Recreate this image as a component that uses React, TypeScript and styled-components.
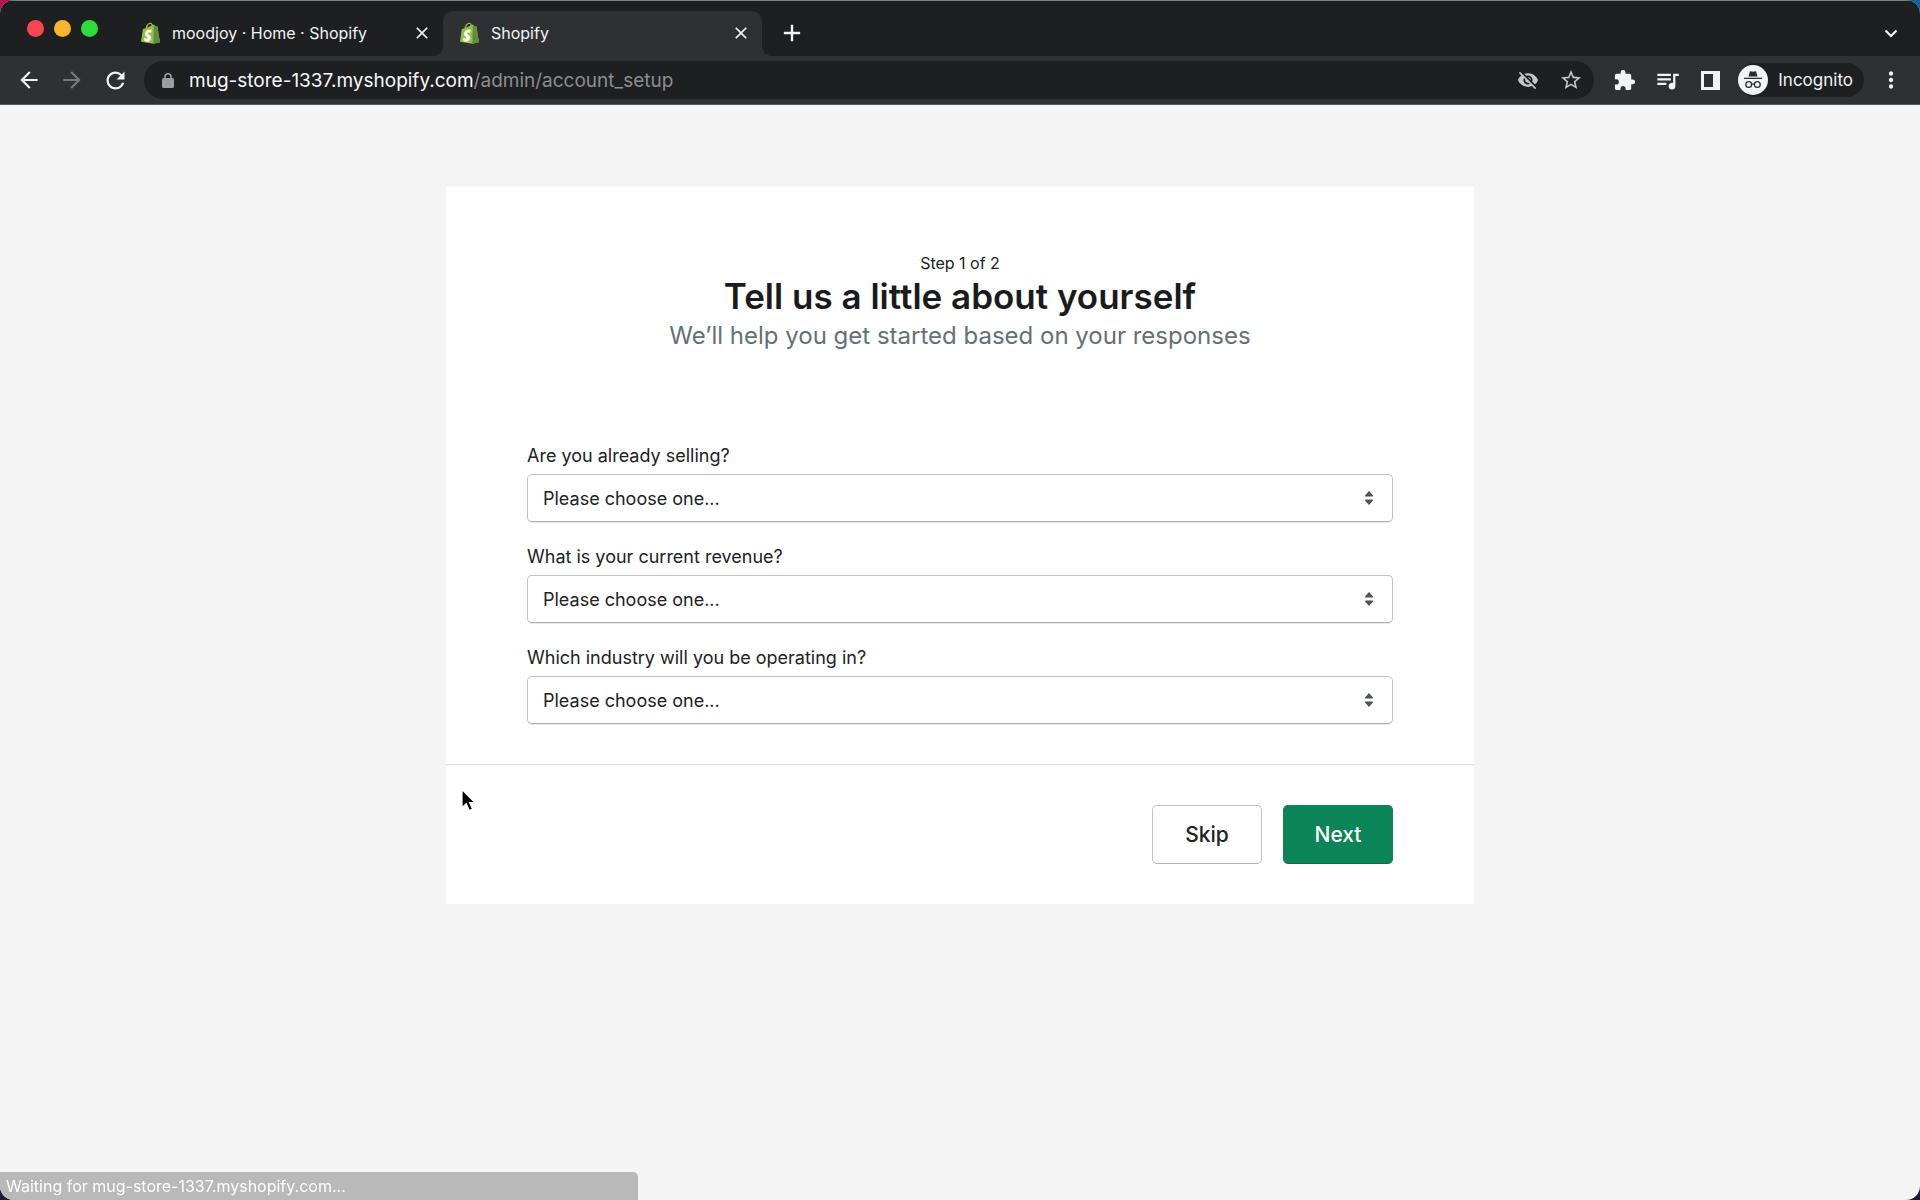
import React, { useState } from "react";
import styled, { createGlobalStyle } from "styled-components";
import {
  MdArrowBack,
  MdArrowForward,
  MdRefresh,
  MdVisibilityOff,
  MdStarOutline,
  MdExtension,
  MdQueueMusic,
  MdMoreVert,
  MdClose,
  MdAdd,
} from "react-icons/md";

const GlobalStyle = createGlobalStyle`
  *, *::before, *::after { box-sizing: border-box; }
  body {
    margin: 0;
    background: #1c1b33;
    font-family: Inter, "Liberation Sans", sans-serif;
    color: #202223;
  }
  button, select { font-family: inherit; }
`;

const Desktop = styled.div`
  min-height: 100vh;
  display: flex;
  background: linear-gradient(90deg, #b5124f 0, #b5124f 24px, #14619c 24px) top / 100% 24px no-repeat, #1c1b33;
`;

const Window = styled.div`
  flex: 1;
  min-width: 0;
  display: flex;
  flex-direction: column;
  border-radius: 14px;
  overflow: hidden;
  background: #f4f4f4;
`;

const TabStrip = styled.header`
  display: flex;
  align-items: flex-end;
  height: 56px;
  background: #1e1f21;
  border-top: 1px solid #7d7f82;
  padding-left: 27px;
  padding-right: 19px;
`;

const Lights = styled.div`
  display: flex;
  gap: 10px;
  align-self: center;
  width: 97px;
`;

const Light = styled.button<{ $color: string }>`
  width: 17px;
  height: 17px;
  padding: 0;
  border: 0;
  border-radius: 50%;
  background: ${(p) => p.$color};
`;

const Tab = styled.div<{ $active?: boolean }>`
  position: relative;
  display: flex;
  align-items: center;
  gap: 12px;
  width: 319px;
  height: 45px;
  padding: 0 11px 1px 17px;
  border-radius: 10px 10px 0 0;
  color: #f1f3f4;
  font-size: 16px;
  background: ${(p) => (p.$active ? "#2f3033" : "transparent")};

  &::before,
  &::after {
    content: "";
    display: ${(p) => (p.$active ? "block" : "none")};
    position: absolute;
    bottom: 0;
    width: 10px;
    height: 10px;
  }
  &::before {
    right: 100%;
    background: radial-gradient(circle at 0 0, transparent 10px, #2f3033 10px);
  }
  &::after {
    left: 100%;
    background: radial-gradient(circle at 100% 0, transparent 10px, #2f3033 10px);
  }
`;

const TabTitle = styled.span`
  flex: 1;
  white-space: nowrap;
`;

const IconButton = styled.button<{ $dim?: boolean }>`
  display: flex;
  align-items: center;
  justify-content: center;
  flex: none;
  width: 20px;
  height: 20px;
  padding: 0;
  border: 0;
  background: none;
  color: ${(p) => (p.$dim ? "#77797c" : "#f1f3f4")};

  svg { flex: none; }
`;

const NewTab = styled.div`
  display: flex;
  align-items: center;
  height: 45px;
  flex: 1;
  justify-content: space-between;
  padding: 0 0 1px 20px;
`;

const Toolbar = styled.nav`
  display: flex;
  align-items: center;
  height: 49px;
  background: #2f3033;
  border-bottom: 1px solid #58595c;
  padding: 0 19px;
`;

const NavButtons = styled.div`
  display: flex;
  gap: 23px;
  width: 125px;
`;

const AddressBar = styled.div`
  flex: 1;
  display: flex;
  align-items: center;
  height: 38px;
  border-radius: 19px;
  background: #1e1f21;
  padding: 0 13px 0 18px;
  color: #9a9c9f;
  font-size: 19px;
`;

const Url = styled.span`
  flex: 1;
  padding-left: 15px;
  color: #8b8d90;
  white-space: nowrap;

  b {
    font-weight: 400;
    color: #f8f9fa;
  }
`;

const PageActions = styled.div`
  display: flex;
  gap: 23px;

  button { color: #c4c6c9; }
`;

const Extensions = styled.div`
  display: flex;
  align-items: center;
  gap: 23px;
  padding: 0 18px 0 20px;
`;

const Profile = styled.button`
  display: flex;
  align-items: center;
  gap: 10px;
  height: 34px;
  padding: 0 11px 0 0;
  margin-right: 17px;
  border: 0;
  border-radius: 17px;
  background: #1e1f21;
  color: #f1f3f4;
  font-size: 17px;
`;

const Page = styled.main`
  flex: 1;
  padding: 81px 24px 40px;
`;

const Card = styled.form`
  max-width: 1028px;
  margin: 0 auto;
  background: #fff;
`;

const CardBody = styled.div`
  padding: 64px 81px 40px;
`;

const Heading = styled.div`
  text-align: center;
  padding-bottom: 89px;
`;

const Step = styled.p`
  margin: 0;
  font-size: 16px;
  line-height: 26px;
`;

const Title = styled.h1`
  margin: 0;
  font-size: 35px;
  font-weight: 600;
  line-height: 40px;
  color: #1a1b1c;
`;

const Subtitle = styled.p`
  margin: 0;
  font-size: 24px;
  line-height: 39px;
  color: #637078;
`;

const Fields = styled.div`
  display: flex;
  flex-direction: column;
  gap: 23px;
`;

const Field = styled.div`
  display: flex;
  flex-direction: column;
  gap: 6px;
`;

const Label = styled.label`
  font-size: 18px;
  line-height: 24px;
`;

const SelectBox = styled.div`
  position: relative;
  display: flex;

  svg {
    position: absolute;
    right: 19px;
    top: 17px;
    pointer-events: none;
  }
`;

const Select = styled.select`
  appearance: none;
  width: 100%;
  height: 48px;
  padding: 0 48px 0 15px;
  border: 1px solid #bfc2c4;
  border-bottom-color: #adb1b4;
  border-radius: 5px;
  background: #fff;
  box-shadow: 0 1px 0 #e6e7e8;
  color: #202223;
  font-size: 18px;
`;

const CardFooter = styled.footer`
  display: flex;
  justify-content: flex-end;
  gap: 21px;
  padding: 40px 81px;
  border-top: 1px solid #dcdedf;
`;

const Button = styled.button<{ $primary?: boolean }>`
  width: 110px;
  height: 59px;
  border: 1px solid ${(p) => (p.$primary ? "#0b8457" : "#bfc2c4")};
  border-bottom-color: ${(p) => (p.$primary ? "#076e47" : "#adb1b4")};
  border-radius: 5px;
  background: ${(p) => (p.$primary ? "#0b8457" : "#fff")};
  color: ${(p) => (p.$primary ? "#fff" : "#202223")};
  font-size: 21px;
  font-weight: 500;
`;

const StatusBubble = styled.div`
  position: fixed;
  left: 0;
  bottom: 0;
  width: 638px;
  height: 28px;
  padding-left: 6px;
  border-radius: 0 5px 0 14px;
  background: #b9b9b9;
  color: #fff;
  font-size: 16px;
  line-height: 28px;
`;

const Pointer = styled.svg`
  position: fixed;
  left: 460px;
  top: 788px;
  pointer-events: none;
`;

const ShopifyBag = () => (
  <svg width="19" height="22" viewBox="0 0 110 124" aria-hidden="true">
    <path fill="#95BF47" d="M95 24c0-1-1-1-1-1l-11-1-8-8c-1-1-2-1-3 0l-4 1C66 8 61 3 54 3 37 3 29 24 26 35l-12 4c-4 1-4 1-4 5L0 112l71 12 39-8z" />
    <path fill="#5E8E3E" d="M94 23l-11-1-8-8-4 110 39-8z" />
    <path fill="#1e1f21" d="M32 33C37 16 45 9 53 9c6 0 8 5 8 9z" />
    <path fill="none" stroke="#95BF47" strokeWidth="5" d="M32 36C37 15 45 6 54 6c8 0 11 9 11 23" />
    <path fill="#fff" stroke="#fff" strokeWidth="3" d="M61 45l-5 15s-5-2-10-2c-8 0-8 5-8 6 0 7 19 10 19 26 0 13-8 21-19 21-14 0-20-8-20-8l4-12s7 6 13 6c4 0 5-3 5-5 0-9-15-9-15-24 0-12 9-24 26-24 7 0 10 1 10 1z" />
  </svg>
);

const LockIcon = () => (
  <svg width="12" height="15" viewBox="0 0 12 15" aria-hidden="true">
    <rect y="5" width="12" height="10" rx="1.500" fill="currentColor" />
    <path fill="none" stroke="currentColor" strokeWidth="1.600" d="M3 6V3.800a3 3 0 0 1 6 0V6" />
  </svg>
);

const SidePanelIcon = () => (
  <svg width="19" height="19" viewBox="0 0 19 19" aria-hidden="true">
    <path fill="currentColor" fillRule="evenodd" d="M0 0h19v19H0zM3 3v13h9V3z" />
  </svg>
);

const IncognitoIcon = () => (
  <svg width="30" height="30" viewBox="0 0 30 30" aria-hidden="true">
    <circle cx="15" cy="15" r="15" fill="#f1f3f4" />
    <path fill="#2a2b2d" d="M10.500 11.500 11.800 6.700Q12 6 12.700 6.200L15 6.800 17.300 6.200Q18 6 18.200 6.700L19.500 11.500zM6 12.700h18v1.400H6z" />
    <g fill="none" stroke="#2a2b2d" strokeWidth="1.300">
      <circle cx="10.700" cy="19.500" r="2.900" />
      <circle cx="19.300" cy="19.500" r="2.900" />
      <path d="M13.600 19.300Q15 18.300 16.400 19.300" />
    </g>
  </svg>
);

const ChevronIcon = () => (
  <svg width="14" height="14" viewBox="0 0 14 14" aria-hidden="true">
    <path fill="none" stroke="currentColor" strokeWidth="2.200" d="M1.500 4.500 7 10l5.500-5.500" />
  </svg>
);

const SelectArrows = () => (
  <svg width="10" height="14" viewBox="0 0 10 14" aria-hidden="true">
    <path fill="#4f5356" d="M5 0 9 4.500Q9.300 5.500 8.300 5.500H1.700Q.7 5.500 1 4.500zM5 14 1 9.500Q.7 8.500 1.700 8.500h6.600q1 0 .7 1z" />
  </svg>
);

const tabs = [
  { title: "moodjoy · Home · Shopify", active: false },
  { title: "Shopify", active: true },
];

const questions = [
  { id: "selling", label: "Are you already selling?", options: ["Yes", "No"] },
  { id: "revenue", label: "What is your current revenue?", options: ["$0", "More than $0"] },
  { id: "industry", label: "Which industry will you be operating in?", options: ["Clothing", "Home", "Other"] },
];

export default function App() {
  const [answers, setAnswers] = useState<Record<string, string>>({});

  return (
    <Desktop>
      <GlobalStyle />
      <Window>
        <TabStrip>
          <Lights>
            <Light type="button" aria-label="Close window" $color="#f84552" />
            <Light type="button" aria-label="Minimize window" $color="#f8b42c" />
            <Light type="button" aria-label="Zoom window" $color="#2fdc3b" />
          </Lights>
          {tabs.map((tab) => (
            <Tab key={tab.title} $active={tab.active}>
              <ShopifyBag />
              <TabTitle>{tab.title}</TabTitle>
              <IconButton type="button" aria-label="Close tab">
                <MdClose size={20} />
              </IconButton>
            </Tab>
          ))}
          <NewTab>
            <IconButton type="button" aria-label="New tab">
              <MdAdd size={28} />
            </IconButton>
            <IconButton type="button" aria-label="Search tabs">
              <ChevronIcon />
            </IconButton>
          </NewTab>
        </TabStrip>
        <Toolbar>
          <NavButtons>
            <IconButton type="button" aria-label="Back"><MdArrowBack size={26} /></IconButton>
            <IconButton type="button" aria-label="Forward" $dim><MdArrowForward size={26} /></IconButton>
            <IconButton type="button" aria-label="Reload"><MdRefresh size={27} /></IconButton>
          </NavButtons>
          <AddressBar>
            <LockIcon />
            <Url><b>mug-store-1337.myshopify.com</b>/admin/account_setup</Url>
            <PageActions>
              <IconButton type="button" aria-label="Third-party cookies blocked"><MdVisibilityOff size={22} /></IconButton>
              <IconButton type="button" aria-label="Bookmark"><MdStarOutline size={24} /></IconButton>
            </PageActions>
          </AddressBar>
          <Extensions>
            <IconButton type="button" aria-label="Extensions"><MdExtension size={23} /></IconButton>
            <IconButton type="button" aria-label="Media"><MdQueueMusic size={27} /></IconButton>
            <IconButton type="button" aria-label="Side panel"><SidePanelIcon /></IconButton>
          </Extensions>
          <Profile type="button">
            <IncognitoIcon />
            Incognito
          </Profile>
          <IconButton type="button" aria-label="Menu"><MdMoreVert size={26} /></IconButton>
        </Toolbar>
        <Page>
          <Card onSubmit={(e) => e.preventDefault()}>
            <CardBody>
              <Heading>
                <Step>Step 1 of 2</Step>
                <Title>Tell us a little about yourself</Title>
                <Subtitle>We’ll help you get started based on your responses</Subtitle>
              </Heading>
              <Fields>
                {questions.map((q) => (
                  <Field key={q.id}>
                    <Label htmlFor={q.id}>{q.label}</Label>
                    <SelectBox>
                      <Select
                        id={q.id}
                        value={answers[q.id] ?? ""}
                        onChange={(e) => setAnswers({ ...answers, [q.id]: e.target.value })}
                      >
                        <option value="">Please choose one...</option>
                        {q.options.map((o) => (
                          <option key={o} value={o}>{o}</option>
                        ))}
                      </Select>
                      <SelectArrows />
                    </SelectBox>
                  </Field>
                ))}
              </Fields>
            </CardBody>
            <CardFooter>
              <Button type="button">Skip</Button>
              <Button type="submit" $primary>Next</Button>
            </CardFooter>
          </Card>
        </Page>
        <StatusBubble role="status">Waiting for mug-store-1337.myshopify.com...</StatusBubble>
      </Window>
      <Pointer width="18" height="26" viewBox="0 0 18 26" aria-hidden="true">
        <path fill="#000" stroke="#fff" strokeWidth="1.200" d="M2 1.500v18l4.300-3.800 3 6.800 3.200-1.400-3-6.600h5.300z" />
      </Pointer>
    </Desktop>
  );
}
